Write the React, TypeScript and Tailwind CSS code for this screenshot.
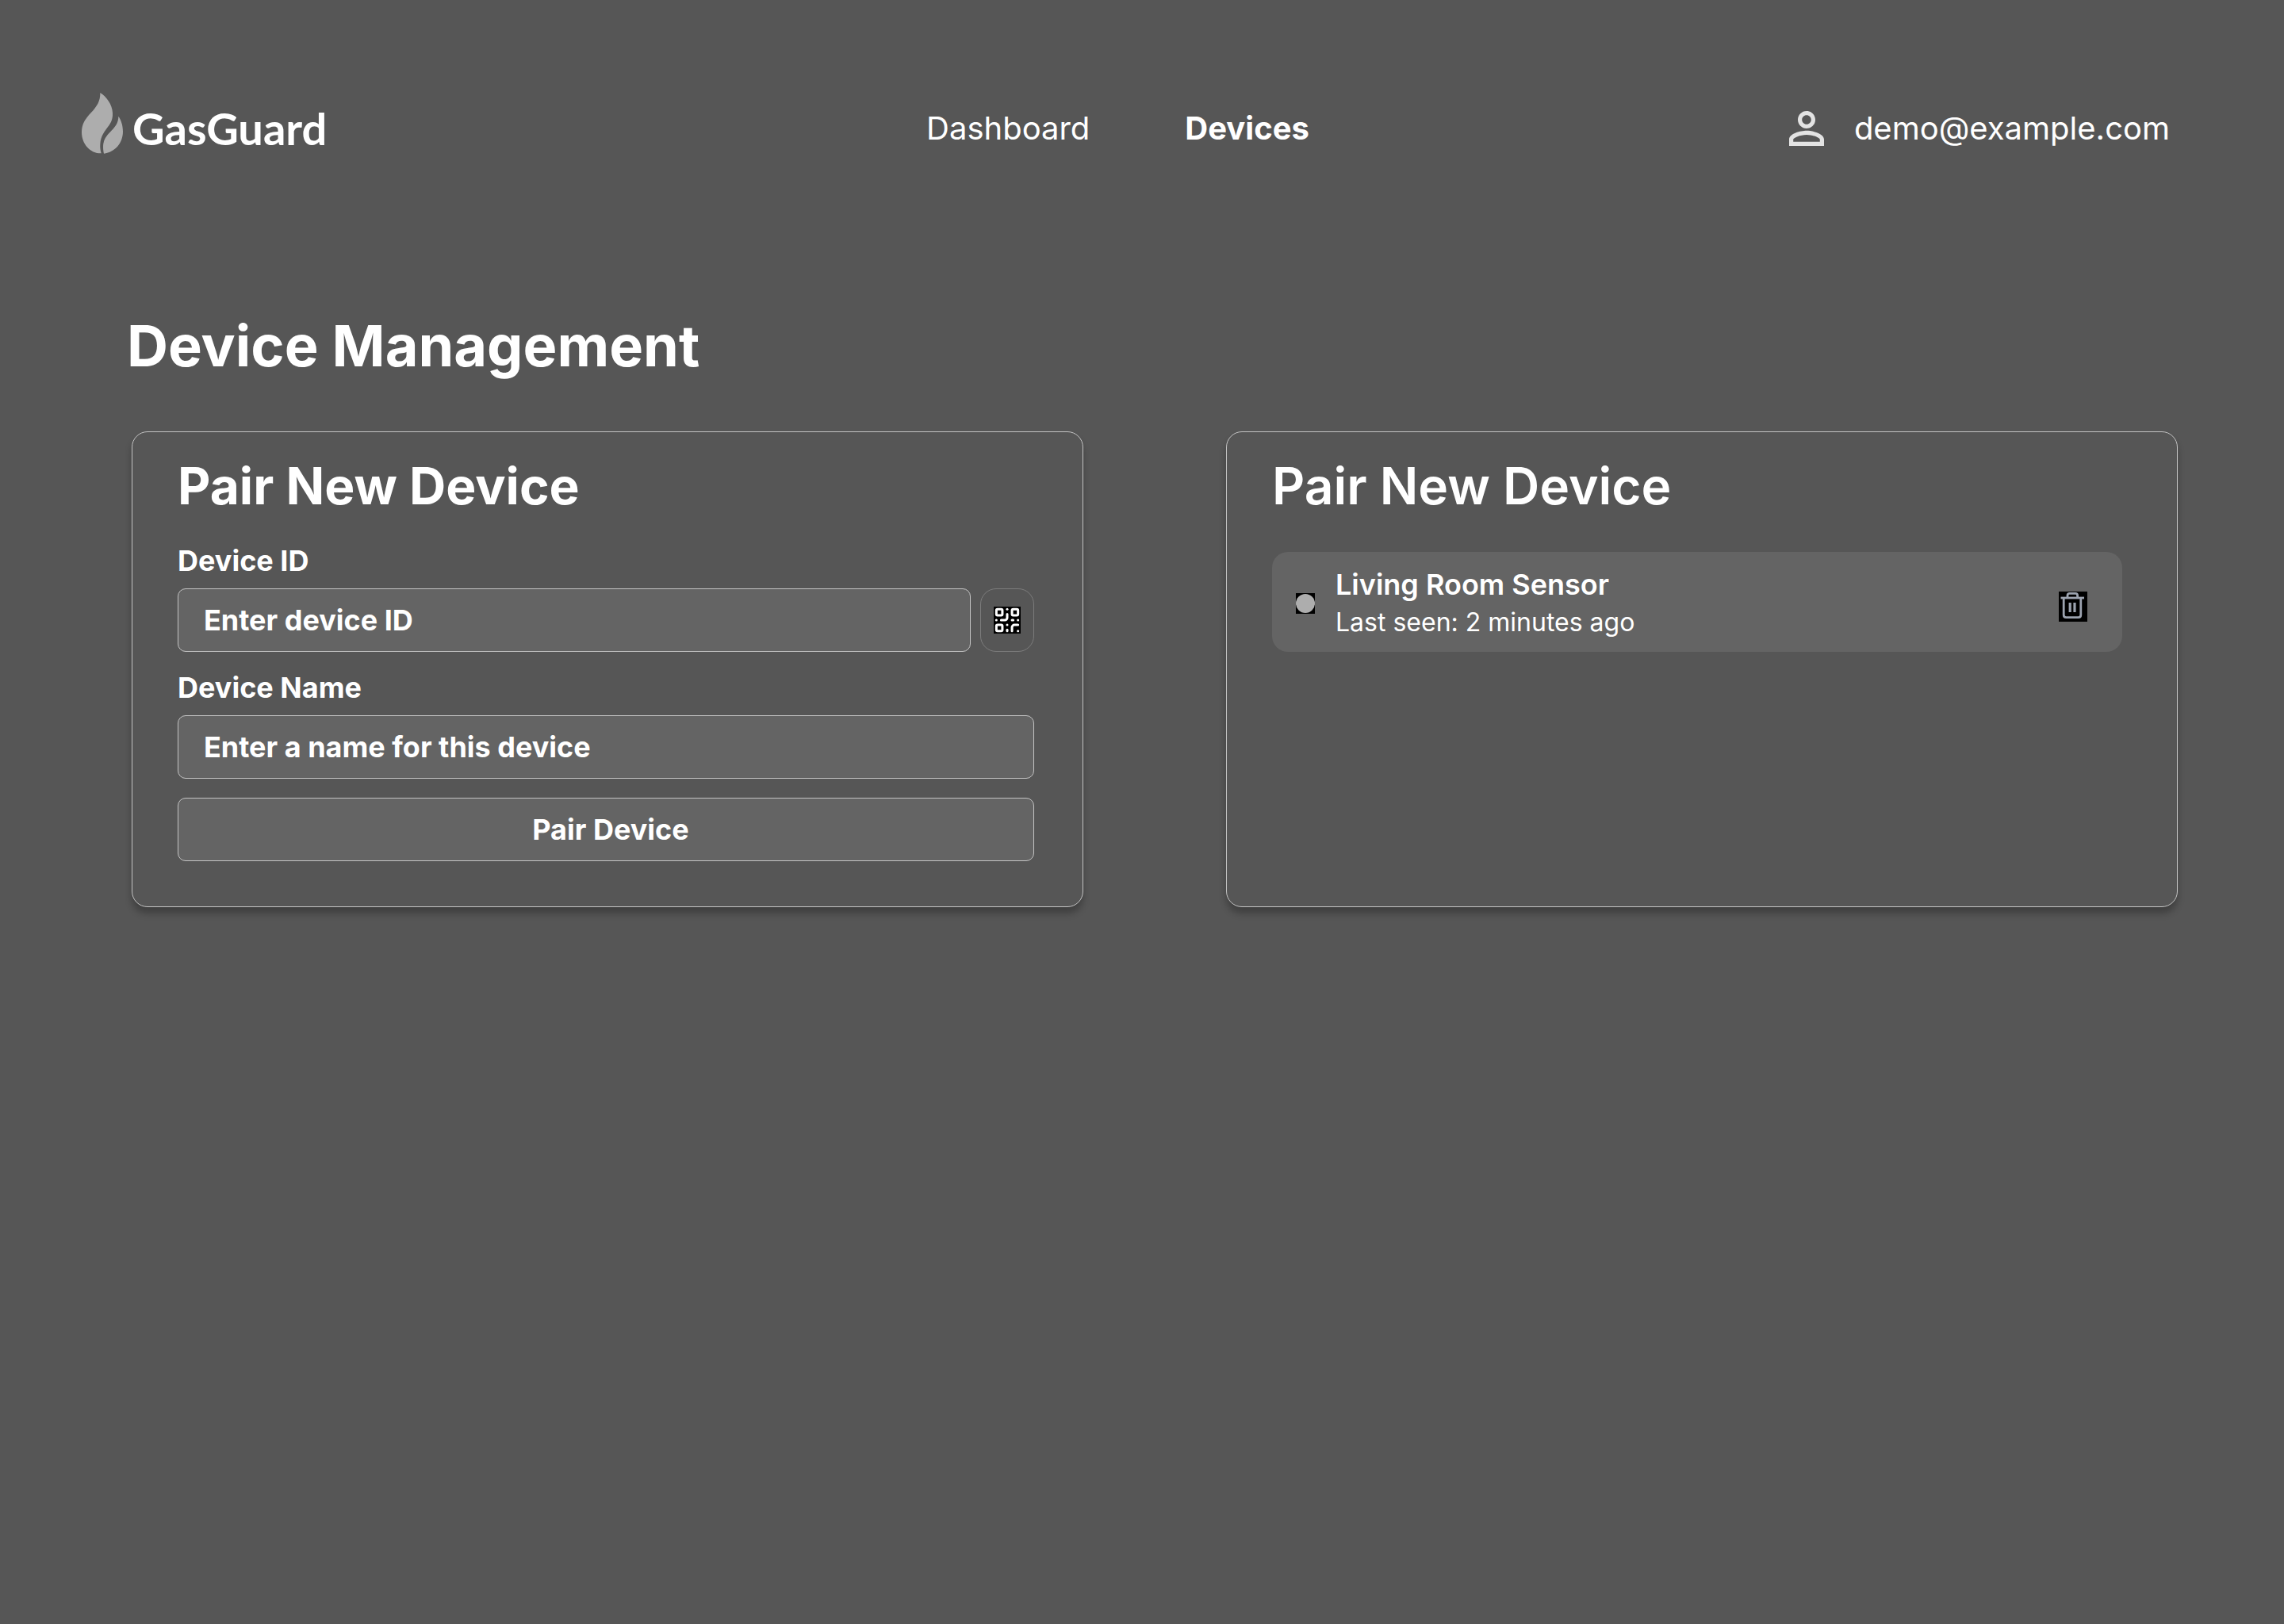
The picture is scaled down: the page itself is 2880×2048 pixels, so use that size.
import React from "react";
import { QrCode } from "lucide-react";

function FlameLogo() {
  return (
    <svg viewBox="0 0 156 231" className="h-[77px] w-[52px] shrink-0" fill="#adadad" aria-hidden="true">
      <path d="M70 0C94 15 116 45 117 76C118 96 113 110 103 124C86 147 72 164 70 194C69 208 71 219 74 229C34 230 0 195 0 149C0 119 13 99 35 76C57 52 71 32 70 0Z" />
      <path d="M139 89C149 103 156 123 156 146C156 189 127 224 84 230C81 216 80 198 83 188C87 170 99 158 114 142C131 124 139 110 139 89Z" />
    </svg>
  );
}

function PersonIcon() {
  return (
    <svg viewBox="4 4 16 16" className="size-11 shrink-0" fill="#e3e3e3" aria-hidden="true">
      <path d="M12 5.9c1.16 0 2.1.94 2.1 2.1s-.94 2.1-2.1 2.1S9.9 9.16 9.9 8s.94-2.1 2.1-2.1m0 9c2.97 0 6.1 1.46 6.1 2.1v1.1H5.9V17c0-.64 3.13-2.1 6.1-2.1M12 4C9.79 4 8 5.79 8 8s1.79 4 4 4 4-1.79 4-4-1.79-4-4-4zm0 9c-2.67 0-8 1.34-8 4v3h16v-3c0-2.66-5.33-4-8-4z" />
    </svg>
  );
}

function TrashIcon() {
  return (
    <svg viewBox="0 0 36 38" className="h-[38px] w-9 bg-black" fill="none" stroke="#9ca3af" strokeWidth="2.8" aria-hidden="true">
      <path d="M2.5 8H32" />
      <path d="M11 8V5Q11 2.4 13.6 2.4H21Q23.6 2.4 23.6 5V8" />
      <path d="M6.2 8V29.5Q6.2 32.6 9.3 32.6H24.7Q27.8 32.6 27.8 29.5V8" />
      <path d="M14.2 14V26M20 14V26" strokeWidth="3.2" />
    </svg>
  );
}

const card =
  "rounded-[20px] border border-[#c4c4c4] bg-[#565656] pt-8 pb-[57px] pl-[57px] pr-[61px] shadow-[0_8px_8px_rgba(0,0,0,0.25)]";
const field =
  "block h-20 w-full min-w-0 rounded-[10px] border border-[#c4c4c4] bg-[#646464] text-4xl font-bold text-white outline-none placeholder:text-white placeholder:opacity-100";
const label = "block text-4xl leading-[46px] font-bold";

export default function App() {
  return (
    <div className="min-h-screen bg-[#565656] font-['Inter',sans-serif] text-white">
      <header className="grid grid-cols-[1fr_auto_1fr] items-center pt-[117px] pr-36 pl-[103px] text-[40px] leading-[48px]">
        <a href="#home" className="flex items-center gap-3 justify-self-start">
          <FlameLogo />
          <span className="pt-3 font-['Lato',sans-serif] text-[56px] leading-[60px] font-bold">GasGuard</span>
        </a>
        <nav className="flex gap-[120px] pt-3 pr-5">
          <a href="#dashboard" className="font-normal">Dashboard</a>
          <a href="#devices" aria-current="page" className="font-bold">Devices</a>
        </nav>
        <a href="#account" className="flex items-center gap-[38px] justify-self-end pt-3 font-normal">
          <PersonIcon />
          <span>demo@example.com</span>
        </a>
      </header>

      <main className="pt-[198px] pr-[134px] pl-40">
        <h1 className="text-[72px] leading-[88px] font-bold">Device Management</h1>

        <div className="mt-16 grid grid-cols-2 gap-[180px] pl-1.5">
          <section className={card}>
            <h2 className="text-[64px] leading-[72px] font-bold">Pair New Device</h2>
            <form className="mt-[35px]">
              <label htmlFor="device-id" className={label}>Device ID</label>
              <div className="mt-3 flex gap-3">
                <input id="device-id" type="text" placeholder="Enter device ID" className={field + " px-8"} />
                <button
                  type="button"
                  aria-label="Scan QR code"
                  className="flex h-20 w-[68px] shrink-0 items-center justify-center rounded-[20px] border border-[#7c7c7c]"
                >
                  <QrCode viewBox="0.8 0.8 22.4 22.4" className="size-[34px] bg-black" />
                </button>
              </div>
              <label htmlFor="device-name" className={label + " mt-[22px]"}>Device Name</label>
              <input
                id="device-name"
                type="text"
                placeholder="Enter a name for this device"
                className={field + " mt-3 px-8"}
              />
              <button type="submit" className={field + " mt-6 pl-3"}>Pair Device</button>
            </form>
          </section>

          <section className={card}>
            <h2 className="text-[64px] leading-[72px] font-semibold">Pair New Device</h2>
            <ul className="mt-[47px] pr-2">
              <li className="flex h-[126px] items-center rounded-[20px] bg-[#646464] pr-11 pl-[30px]">
                <span className="mt-1 flex h-[26px] w-6 items-center justify-center bg-black">
                  <span className="size-6 rounded-full bg-[#adadad]" />
                </span>
                <div className="ml-[26px] flex-1">
                  <p className="text-4xl leading-[52px] font-semibold">Living Room Sensor</p>
                  <p className="text-[32px] leading-[44px]">Last seen: 2 minutes ago</p>
                </div>
                <button type="button" aria-label="Remove Living Room Sensor" className="mt-3">
                  <TrashIcon />
                </button>
              </li>
            </ul>
          </section>
        </div>
      </main>
    </div>
  );
}
